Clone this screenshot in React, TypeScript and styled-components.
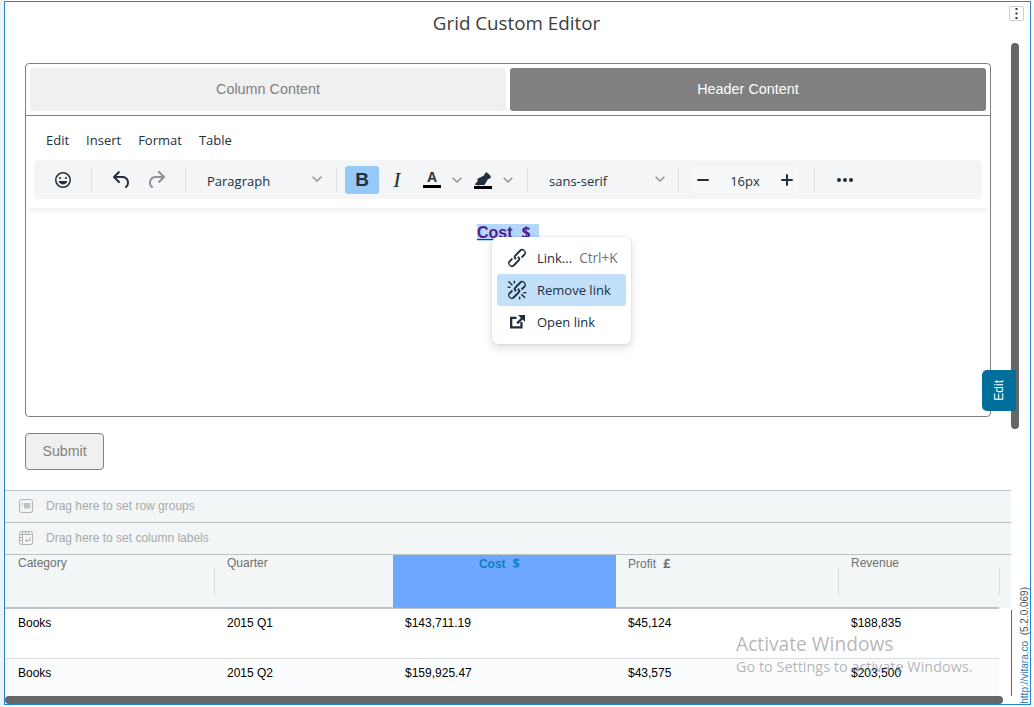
import React from "react";
import styled, { createGlobalStyle } from "styled-components";

const Global = createGlobalStyle`
  html, body { margin: 0; padding: 0; background: #fff; overflow: hidden; }
  body { font-family: "Liberation Sans", Arial, sans-serif; }
`;
const UI = `"Open Sans", "Noto Sans", sans-serif`;
const INK = "#222f3e";

const Page = styled.div`
  width: 1034px; height: 707px; box-sizing: border-box;
  padding: 1px 3px 2px 4px;
  background: linear-gradient(90deg, #eef2f5 0, #eef2f5 4px, #fff 4px);
`;
const Frame = styled.div`
  position: relative; box-sizing: border-box; height: 704px;
  border: 1px solid #1f86cf; border-left-width: 1.5px;
  background: #fff; overflow: hidden;
  display: flex; flex-direction: column;
`;
const Title = styled.h1`
  margin: 0; height: 61px; padding-top: 8px; box-sizing: border-box;
  text-align: center; width: 1023px;
  font: 400 18.8px/26px ${UI}; color: #3c3c3c;
`;
const EditorBox = styled.section`
  box-sizing: border-box; width: 966px; height: 354px; margin-left: 20px;
  border: 1px solid #808080; border-radius: 4px;
  display: flex; flex-direction: column; flex: none;
`;
const Tabs = styled.div`
  display: flex; gap: 4px; padding: 4px; height: 52px; box-sizing: border-box;
  border-bottom: 1px solid #808080;
`;
const Tab = styled.div<{ $active?: boolean }>`
  flex: 1; display: flex; align-items: center; justify-content: center;
  height: 43px; box-sizing: border-box; padding-bottom: 2px; border-radius: 3px;
  font-size: 14.4px; background: ${p => (p.$active ? "#808080" : "#f0f0f0")};
  color: ${p => (p.$active ? "#fff" : "#808080")};
`;
const Editor = styled.div`
  position: relative; flex: 1;
`;
const Header = styled.div`
  padding: 0 8px; height: 92px; box-sizing: border-box;
  box-shadow: 0 4px 6px -2px rgba(34,47,62,.1);
`;
const MenuBar = styled.div`
  display: flex; gap: 17px; height: 44px; padding: 14px 0 0 12px; box-sizing: border-box;
  font: 400 13px/20px ${UI}; color: ${INK};
`;
const Toolbar = styled.div`
  height: 39px; background: #f4f5f6; border-radius: 4px;
  display: flex; align-items: center;
`;
const Group = styled.div<{ $w: number; $last?: boolean }>`
  width: ${p => p.$w}px; height: 24px; flex: none; box-sizing: border-box;
  display: flex; align-items: center; position: relative;
  border-right: ${p => (p.$last ? "none" : "1px solid #dcdfe3")};
`;
const IconBtn = styled.button<{ $w?: number; $on?: boolean; $off?: boolean; $ml?: number }>`
  all: unset; box-sizing: border-box; flex: none;
  width: ${p => p.$w ?? 34}px; height: 28px; border-radius: 3px;
  margin-left: ${p => p.$ml ?? 0}px;
  display: flex; align-items: center; justify-content: center;
  background: ${p => (p.$on ? "#95caf7" : "transparent")};
  color: ${INK}; opacity: ${p => (p.$off ? 0.5 : 1)};
`;
const BoldGlyph = styled.span`
  font: 700 19px/1 "Liberation Sans", sans-serif; color: ${INK};
`;
const ItalicGlyph = styled.span`
  font: italic 400 22px/1 "Liberation Serif", serif; color: ${INK};
`;
const ColorGlyph = styled.span`
  display: flex; flex-direction: column; align-items: center; width: 18px;
  font: 700 14px/13px "Liberation Sans", sans-serif; color: ${INK};
  &::after { content: ""; display: block; width: 18px; height: 3px; background: #000; margin-top: 1px; }
`;
const SelectBtn = styled.div<{ $w: number; $ml: number }>`
  width: ${p => p.$w}px; margin-left: ${p => p.$ml}px; flex: none;
  display: flex; align-items: center; justify-content: space-between;
  font: 400 13px/20px ${UI}; color: ${INK};
  span { margin-top: 2px; }
  svg { margin-top: -1px; }
`;
const SizeBox = styled.div`
  display: flex; align-items: center; height: 26px; margin-left: 12px; border-radius: 3px; background: #f7f8f9;
`;
const SizeText = styled.span`
  width: 60px; margin-top: 2px; text-align: center; font: 400 13px/20px ${UI}; color: ${INK};
`;
const Body = styled.div`
  text-align: center; padding-top: 16px; height: 200px; box-sizing: border-box;
  font: 700 16px/16px "Liberation Sans", sans-serif;
`;
const CostLink = styled.a`
  color: #551a8b; text-decoration: underline; background: #b4d7ff; padding-right: 4px; white-space: pre;
`;
const CostUnit = styled.span`
  font: 700 16px/16px ${UI};
`;
const Popup = styled.div`
  position: absolute; left: 466px; top: 121px; width: 139px; height: 107px;
  box-sizing: border-box; padding: 5px; background: #fff; border-radius: 6px;
  box-shadow: 0 0 2px rgba(34,47,62,.2), 0 4px 8px rgba(34,47,62,.15);
  font: 400 13px/20px ${UI}; color: ${INK};
`;
const PopupItem = styled.div<{ $hover?: boolean }>`
  height: 32px; border-radius: 3px; display: flex; align-items: center; padding-left: 8px; gap: 8px;
  background: ${p => (p.$hover ? "#c2e0f9" : "transparent")};
  svg { flex: none; }
`;
const Shortcut = styled.span`
  color: #6b7480; font-size: 13.6px; margin-left: -1px;
`;
const Submit = styled.button`
  all: unset; box-sizing: border-box; flex: none;
  width: 79px; height: 37px; margin: 16px 0 0 20px;
  border: 1px solid #808080; border-radius: 4px; background: #f0f0f0;
  text-align: center; font: 400 14.2px/35px "Liberation Sans", sans-serif; color: #808080;
`;
const DropBar = styled.div<{ $mt?: number }>`
  box-sizing: border-box; width: 1006px; height: 32px; flex: none;
  margin-top: ${p => p.$mt ?? 0}px;
  background: #f2f6f7; border-top: 1px solid #bdc3c7;
  display: flex; align-items: center; padding: 0 0 2px 14px; gap: 13px;
  font: 400 12px/1 "Liberation Sans", sans-serif; color: #a9a9a9;
`;
const GridHead = styled.div`
  width: 1006px; height: 54px; flex: none; box-sizing: border-box;
  display: flex; background: #f2f6f7; border-top: 1px solid #bdc3c7;
`;
const HeadRule = styled.div`
  width: 994px; height: 2px; background: #bdc3c7; flex: none; margin-top: -1px; position: relative;
`;
const HeadCell = styled.div<{ $w: number; $pad?: number; $sel?: boolean; $sep?: boolean }>`
  position: relative; width: ${p => p.$w}px; flex: none; box-sizing: border-box;
  padding: 1px 0 0 ${p => p.$pad ?? 13}px; font: 400 12px/14px "Liberation Sans", sans-serif; color: #707070;
  white-space: pre;
  ${p => p.$sel && "background:#6ea8fe; color:#0f7fc4; font-weight:700; text-align:center; padding-left:0; padding-right:10px; z-index:1;"}
  ${p => p.$sep && "&::after{content:'';position:absolute;right:-1px;top:13px;height:27px;width:1px;background:#d9dcde;}"}
`;
const HeadUnit = styled.span`
  margin-left: 7px; font: 700 13px/14px ${UI};
`;
const Row = styled.div<{ $h: number; $alt?: boolean }>`
  width: 994px; height: ${p => p.$h}px; flex: none; box-sizing: border-box; display: flex;
  background: ${p => (p.$alt ? "#fbfcfe" : "#fff")};
  box-shadow: ${p => (p.$alt ? "inset 0 1px #d9dcde" : "none")};
`;
const Cell = styled.div<{ $w: number; $pad: number; $top: number }>`
  width: ${p => p.$w}px; flex: none; box-sizing: border-box; padding: ${p => p.$top}px 0 0 ${p => p.$pad}px;
  font: 400 12px/14px "Liberation Sans", sans-serif; color: #000;
`;
const VScroll = styled.div`
  position: absolute; left: 1005.5px; top: 41px; width: 8px; height: 386px; border-radius: 4px; background: #666;
`;
const HScroll = styled.div`
  position: absolute; left: 0; top: 694px; width: 998px; height: 8px; border-radius: 4px; background: #666;
`;
const RowEdge = styled.div`
  position: absolute; left: 1005.5px; top: 608px; width: 1px; height: 86px; background: #666;
`;
const Kebab = styled.div`
  position: absolute; left: 1004px; top: 4px; width: 15px; height: 15px; box-sizing: border-box;
  border: 1px solid #cfcfcf; border-radius: 2px; display: flex; align-items: center; justify-content: center;
`;
const EditTab = styled.div`
  position: absolute; left: 977px; top: 368px; width: 34px; height: 41px; box-sizing: border-box;
  background: #006f9c; border-radius: 5px 0 0 5px; color: #fff;
  display: flex; align-items: center; justify-content: center;
  font: 400 12px/1 "Liberation Sans", sans-serif;
  span { writing-mode: vertical-rl; transform: rotate(180deg); }
`;
const Version = styled.div`
  position: absolute; left: 1014px; bottom: 0; writing-mode: vertical-rl; transform: rotate(180deg);
  font: 400 10px/12px "Liberation Sans", sans-serif; color: #555; white-space: pre;
  a { color: #1f78b4; text-decoration: underline; }
`;
const Watermark = styled.div`
  position: absolute; left: 731px; top: 629px; color: rgba(120,120,120,.55); font-family: ${UI}; pointer-events: none; z-index: 2;
`;
const WmTitle = styled.div` font-size: 19.2px; line-height: 25px; `;
const WmSub = styled.div` font-size: 14.45px; line-height: 20px; margin-top: 1px; white-space: nowrap; `;

const Svg = ({ size = 24, children }: { size?: number; children: React.ReactNode }) => (
  <svg width={size} height={size} viewBox="0 0 24 24" fill="currentColor" aria-hidden="true">{children}</svg>
);
const Chevron = () => (
  <svg width="10" height="6" viewBox="0 0 10 6" fill="none" stroke="#8b929a" strokeWidth="1.4"><path d="M.6.8 5 5 9.4.8" /></svg>
);
const Emoji = () => <Svg><path d="M9 11c.6 0 1-.4 1-1s-.4-1-1-1a1 1 0 0 0-1 1c0 .6.4 1 1 1zm6 0c.6 0 1-.4 1-1s-.4-1-1-1a1 1 0 0 0-1 1c0 .6.4 1 1 1zm-3 5.5c2.1 0 4-1.5 4.4-3.5H7.6c.5 2 2.3 3.5 4.4 3.5zM12 4a8 8 0 1 0 0 16 8 8 0 0 0 0-16zm0 14.5a6.5 6.5 0 1 1 0-13 6.5 6.5 0 0 1 0 13z" /></Svg>;
const Undo = () => <Svg><path d="M6.4 8H12c3.7 0 6.2 2 6.8 5.1.6 2.7-.4 5.6-2.3 6.8a1 1 0 0 1-1-1.8c1.1-.6 1.8-2.7 1.4-4.6-.5-2.1-2.1-3.5-4.9-3.5H6.4l3.3 3.3a1 1 0 1 1-1.4 1.4l-5-5a1 1 0 0 1 0-1.4l5-5a1 1 0 0 1 1.4 1.4L6.4 8z" /></Svg>;
const Redo = () => <Svg><path d="M17.6 10H12c-2.8 0-4.4 1.4-4.9 3.5-.4 2 .3 4 1.4 4.6a1 1 0 1 1-1 1.8c-2-1.2-2.9-4.1-2.3-6.8.6-3 3-5.1 6.8-5.1h5.6l-3.3-3.3a1 1 0 1 1 1.4-1.4l5 5a1 1 0 0 1 0 1.4l-5 5a1 1 0 0 1-1.4-1.4l3.3-3.3z" /></Svg>;
const Marker = () => <Svg><path d="M3 18h18v3H3z" fill="#000" /><path d="M3.5 16.5 6.5 13.5v-2.8l6.5-3.2 1-2.2c.6-.8 1.8-1 2.6-.3l2.8 2.7c.7.8.6 2-.3 2.6l-2.2 1-3.4 5.7H10l-1.4.1-1 .4z" /></Svg>;
const Minus = () => <Svg><rect x="6" y="11" width="12" height="2" rx="1" /></Svg>;
const Plus = () => <Svg><path d="M12 6a1 1 0 0 1 1 1v4h4a1 1 0 0 1 0 2h-4v4a1 1 0 0 1-2 0v-4H7a1 1 0 0 1 0-2h4V7a1 1 0 0 1 1-1z" /></Svg>;
const More = () => <Svg><circle cx="6" cy="12" r="2" /><circle cx="12" cy="12" r="2" /><circle cx="18" cy="12" r="2" /></Svg>;
const LinkIcon = () => <Svg><path d="M6.2 12.3a1 1 0 0 1 1.4 1.4l-2 2a2 2 0 1 0 2.6 2.8l4.8-4.8a1 1 0 0 0 0-1.4 1 1 0 1 1 1.4-1.3 2.9 2.9 0 0 1 0 4L9.6 20a3.9 3.9 0 0 1-5.5-5.5l2-2zm11.6-.6a1 1 0 0 1-1.4-1.4l2-2a2 2 0 1 0-2.6-2.8L11 10.3a1 1 0 0 0 0 1.4A1 1 0 1 1 9.6 13a2.9 2.9 0 0 1 0-4L14.4 4a3.9 3.9 0 0 1 5.5 5.5l-2 2z" /></Svg>;
const Unlink = () => <Svg><path d="M6.2 12.3a1 1 0 0 1 1.4 1.4l-2.1 2a2 2 0 1 0 2.7 2.8l4.8-4.8a1 1 0 0 0 0-1.4 1 1 0 1 1 1.4-1.3 2.9 2.9 0 0 1 0 4L9.6 20a3.9 3.9 0 0 1-5.5-5.5l2-2zm11.6-.6a1 1 0 0 1-1.4-1.4l2.1-2a2 2 0 1 0-2.7-2.8L11 10.3a1 1 0 0 0 0 1.4A1 1 0 1 1 9.6 13a2.9 2.9 0 0 1 0-4L14.4 4a3.9 3.9 0 0 1 5.5 5.5l-2 2zM7.6 6.3a.8.8 0 0 1-1 1.1L3.3 4.2a.7.7 0 1 1 1-1l3.2 3.1zM5.1 8.6a.8.8 0 0 1 0 1.5H3a.8.8 0 0 1 0-1.5H5zm5-3.5a.8.8 0 0 1-1.5 0V3a.8.8 0 0 1 1.5 0v2zm6 11.8a.8.8 0 0 1 1-1l3.2 3.2a.8.8 0 0 1-1 1L16 17zm-2.2 2a.8.8 0 0 1 1.5 0V21a.8.8 0 0 1-1.5 0V19zm5-3.5a.7.7 0 1 1 0-1.5H21a.8.8 0 0 1 0 1.5h-2z" /></Svg>;
const OpenIcon = () => <Svg><path d="M5 6.8h6.5V9H7.3v7.2h8V12h2.3v6.5H5z" /><path d="M13 5h7v7l-2.4-2.4-4.6 4.6-1.7-1.7 4.6-4.6z" /></Svg>;
const GroupIcon = () => (
  <svg width="14" height="14" viewBox="0 0 14 14" fill="none" aria-hidden="true">
    <rect x=".5" y=".5" width="13" height="13" rx="2" stroke="#b5b0b5" />
    <rect x="5" y="4" width="6.5" height="5.5" fill="#c4c4c4" />
    <rect x="2.5" y="4" width="1.5" height="2" fill="#c4c4c4" />
  </svg>
);
const PivotIcon = () => (
  <svg width="14" height="14" viewBox="0 0 14 14" fill="none" stroke="#b5b0b5" aria-hidden="true">
    <rect x=".5" y=".5" width="13" height="13" rx="2" />
    <path d="M.5 3.5h13M.5 6.5h3M.5 9.5h3M3.5.5v13M6.5.5v3M9.5.5v3" />
    <path d="M11 6v3.5H6.5M8 8l-1.5 1.5L8 11" />
  </svg>
);

const widths = [209, 179, 223, 222, 161];
const pads = [13, 13, 12, 12, 13];
const rows = [
  ["Books", "2015 Q1", "$143,711.19", "$45,124", "$188,835"],
  ["Books", "2015 Q2", "$159,925.47", "$43,575", "$203,500"],
];

export default function App() {
  return (
    <Page>
      <Global />
      <Frame>
        <Title>Grid Custom Editor</Title>
        <EditorBox>
          <Tabs>
            <Tab>Column Content</Tab>
            <Tab $active>Header Content</Tab>
          </Tabs>
          <Editor>
            <Header>
              <MenuBar><span>Edit</span><span>Insert</span><span>Format</span><span>Table</span></MenuBar>
              <Toolbar>
                <Group $w={58}><IconBtn $ml={12}><Emoji /></IconBtn></Group>
                <Group $w={94}>
                  <IconBtn $ml={13}><Undo /></IconBtn>
                  <IconBtn $off><Redo /></IconBtn>
                </Group>
                <Group $w={151}><SelectBtn $w={115} $ml={21}><span>Paragraph</span><Chevron /></SelectBtn></Group>
                <Group $w={191}>
                  <IconBtn $ml={8} $on><BoldGlyph>B</BoldGlyph></IconBtn>
                  <IconBtn $ml={1}><ItalicGlyph>I</ItalicGlyph></IconBtn>
                  <IconBtn $w={28} $ml={4}><ColorGlyph>A</ColorGlyph></IconBtn>
                  <IconBtn $w={16} $ml={3}><Chevron /></IconBtn>
                  <IconBtn $w={32} $ml={2}><Marker /></IconBtn>
                  <IconBtn $w={16} $ml={1}><Chevron /></IconBtn>
                </Group>
                <Group $w={151}><SelectBtn $w={116} $ml={21}><span>sans-serif</span><Chevron /></SelectBtn></Group>
                <Group $w={136}>
                  <SizeBox>
                    <IconBtn $w={24}><Minus /></IconBtn>
                    <SizeText>16px</SizeText>
                    <IconBtn $w={24}><Plus /></IconBtn>
                  </SizeBox>
                </Group>
                <Group $w={60} $last><IconBtn $ml={13}><More /></IconBtn></Group>
              </Toolbar>
            </Header>
            <Body><CostLink>{"Cost\u00a0\u00a0"}<CostUnit>$</CostUnit>{"\u00a0"}</CostLink></Body>
            <Popup>
              <PopupItem><LinkIcon /><span>Link...</span><Shortcut>Ctrl+K</Shortcut></PopupItem>
              <PopupItem $hover><Unlink /><span>Remove link</span></PopupItem>
              <PopupItem><OpenIcon /><span>Open link</span></PopupItem>
            </Popup>
          </Editor>
        </EditorBox>
        <Submit>Submit</Submit>
        <DropBar $mt={20}><GroupIcon /><span>Drag here to set row groups</span></DropBar>
        <DropBar><PivotIcon /><span>Drag here to set column labels</span></DropBar>
        <GridHead>
          <HeadCell $w={209} $sep>Category</HeadCell>
          <HeadCell $w={179} $sep>Quarter</HeadCell>
          <HeadCell $w={223} $sel>Cost<HeadUnit>$</HeadUnit></HeadCell>
          <HeadCell $w={222} $pad={12} $sep>Profit<HeadUnit>£</HeadUnit></HeadCell>
          <HeadCell $w={161} $sep>Revenue</HeadCell>
        </GridHead>
        <HeadRule />
        {rows.map((r, i) => (
          <Row key={i} $h={i ? 38 : 49} $alt={i > 0}>
            {r.map((c, j) => <Cell key={j} $w={widths[j]} $pad={pads[j]} $top={i ? 8 : 7}>{c}</Cell>)}
          </Row>
        ))}
        <VScroll />
        <RowEdge />
        <HScroll />
        <Kebab>
          <svg width="3" height="11" viewBox="0 0 3 11" fill="#333" aria-hidden="true"><rect x=".5" y="0" width="2" height="2" /><rect x=".5" y="4.5" width="2" height="2" /><rect x=".5" y="9" width="2" height="2" /></svg>
        </Kebab>
        <EditTab><span>Edit</span></EditTab>
        <Version><a>http://vitara.co</a>{"  (5.2.0.069)"}</Version>
        <Watermark>
          <WmTitle>Activate Windows</WmTitle>
          <WmSub>Go to Settings to activate Windows.</WmSub>
        </Watermark>
      </Frame>
    </Page>
  );
}
